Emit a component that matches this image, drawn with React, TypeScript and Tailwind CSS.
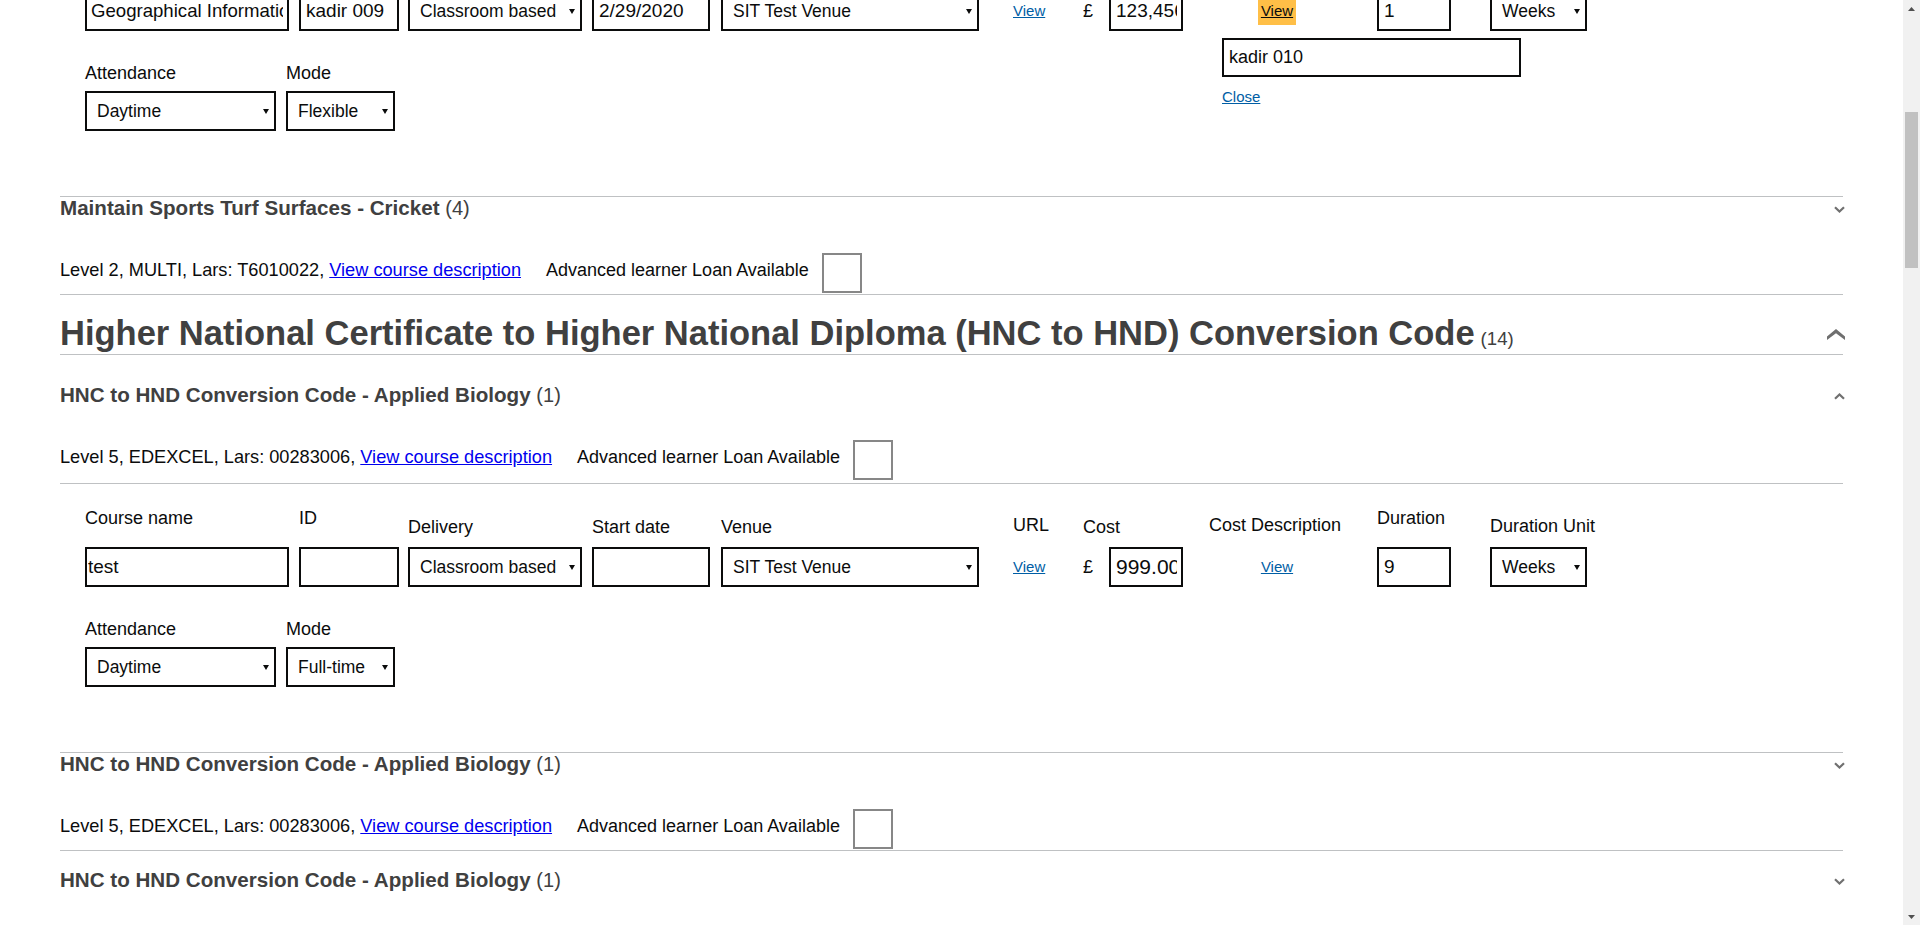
import React from "react";

type FormValues = {
  name: string;
  nameSize: string;
  id: string;
  start: string;
  cost: string;
  costSize: string;
  duration: string;
  mode: string;
  namePad: string;
  focused?: boolean;
};

function Chevron({ dir }: { dir: "up" | "down" }) {
  return (
    <svg width="11" height="7" viewBox="0 0 11 7" className="-mr-[2px]">
      <path
        d={dir === "down" ? "M1 1.2 L5.5 5.5 L10 1.2" : "M1 5.8 L5.5 1.5 L10 5.8"}
        fill="none"
        stroke="#707070"
        strokeWidth="2.2"
      />
    </svg>
  );
}

function BigChevron() {
  return (
    <svg width="18" height="11" viewBox="0 0 18 11" className="-mr-[2px]">
      <polygon points="9,0 18,7.5 18,11 9,4.2 0,11 0,7.5" fill="#6f6f6f" />
    </svg>
  );
}

function Select({ value, w }: { value: string; w: string }) {
  return (
    <div
      className={`flex h-10 items-center justify-between border-2 border-[#0b0c0c] bg-white pl-[10px] pr-[5px] text-[17.5px] text-[#0b0c0c] ${w}`}
    >
      <span className="whitespace-nowrap">{value}</span>
      <svg width="6" height="5" viewBox="0 0 6 5">
        <path d="M0 0H6L3 5Z" fill="#0b0c0c" />
      </svg>
    </div>
  );
}

function TextInput({
  value,
  w,
  pad = "pl-[5px]",
  size = "text-[19px]",
}: {
  value: string;
  w: string;
  pad?: string;
  size?: string;
}) {
  return (
    <input
      readOnly
      value={value}
      className={`h-10 border-2 border-[#0b0c0c] bg-white pr-[4px] text-[#0b0c0c] outline-none ${size} ${pad} ${w}`}
    />
  );
}

function Col({ w, pt, label, children }: { w: string; pt: string; label: string; children: React.ReactNode }) {
  return (
    <div className={`shrink-0 ${w}`}>
      <div className={`h-[47px] leading-6 whitespace-nowrap ${pt}`}>{label}</div>
      {children}
    </div>
  );
}

function ViewLink() {
  return <a className="text-[15px] leading-[18px] text-[#005ea5] underline">View</a>;
}

function CourseForm({ v }: { v: FormValues }) {
  return (
    <div className="border-t border-[#bfc1c3] pt-4 pb-[65px] pl-[25px] text-[18px] text-[#0b0c0c]">
      <div className="flex items-start">
        <Col w="w-[214px]" pt="pt-[6px]" label="Course name">
          <TextInput value={v.name} w="w-[204px]" pad={v.namePad} size={v.nameSize} />
        </Col>
        <Col w="w-[109px]" pt="pt-[6px]" label="ID">
          <TextInput value={v.id} w="w-[100px]" />
        </Col>
        <Col w="w-[184px]" pt="pt-[15px]" label="Delivery">
          <Select value="Classroom based" w="w-[174px]" />
        </Col>
        <Col w="w-[129px]" pt="pt-[15px]" label="Start date">
          <TextInput value={v.start} w="w-[118px]" />
        </Col>
        <Col w="w-[292px]" pt="pt-[15px]" label="Venue">
          <Select value="SIT Test Venue" w="w-[258px]" />
        </Col>
        <Col w="w-[70px]" pt="pt-[13px]" label="URL">
          <div className="flex h-10 items-center">
            <ViewLink />
          </div>
        </Col>
        <Col w="w-[126px]" pt="pt-[15px]" label="Cost">
          <div className="flex h-10 items-center">
            <span>£</span>
            <TextInput value={v.cost} w="w-[74px] ml-[16px]" size={v.costSize} />
          </div>
        </Col>
        <Col w="w-[168px]" pt="pt-[13px]" label="Cost Description">
          <div className="relative flex h-10 w-[136px] items-center justify-center">
            {v.focused ? (
              <a className="bg-[#ffbf47] px-[3px] py-[4px] text-[15px] leading-[20px] text-[#0b0c0c] underline">View</a>
            ) : (
              <ViewLink />
            )}
            {v.focused && (
              <div className="absolute left-[13px] top-[47px] z-10">
                <input
                  readOnly
                  value="kadir 010"
                  className="h-[39px] w-[299px] border-2 border-[#0b0c0c] bg-white px-[5px] text-[18px] text-[#0b0c0c] outline-none"
                />
                <a className="mt-[11px] block text-[15px] leading-[18px] text-[#005ea5] underline">Close</a>
              </div>
            )}
          </div>
        </Col>
        <Col w="w-[113px]" pt="pt-[6px]" label="Duration">
          <TextInput value={v.duration} w="w-[74px]" />
        </Col>
        <Col w="w-[120px]" pt="pt-[14px]" label="Duration Unit">
          <Select value="Weeks" w="w-[97px]" />
        </Col>
      </div>

      <div className="flex items-start pt-[30px]">
        <div className="w-[201px] shrink-0">
          <div className="leading-6">Attendance</div>
          <div className="mt-[6px]">
            <Select value="Daytime" w="w-[191px]" />
          </div>
        </div>
        <div className="shrink-0">
          <div className="leading-6">Mode</div>
          <div className="mt-[6px]">
            <Select value={v.mode} w="w-[109px]" />
          </div>
        </div>
      </div>
    </div>
  );
}

function CourseItem({
  title,
  count,
  meta,
  open,
  top = "",
  border = true,
  bottom = "pb-[1px]",
}: {
  title: string;
  count: string;
  meta: string;
  open?: boolean;
  top?: string;
  border?: boolean;
  bottom?: string;
}) {
  return (
    <div className={`${border ? "border-t border-[#bfc1c3]" : ""} ${top} ${bottom}`}>
      <div className="flex h-6 items-center justify-between">
        <h3 className="mb-[3px] text-[20.6px] font-bold leading-6 whitespace-nowrap text-[#404040]">
          {title} <span className="text-[20px] font-normal leading-none">{count}</span>
        </h3>
        <Chevron dir={open ? "up" : "down"} />
      </div>
      <div className="mt-8 flex items-start text-[18px] text-[#0b0c0c]">
        <p className="mt-[5px] text-[18.2px] leading-6 whitespace-nowrap">
          {meta} <a className="text-[#0000ee] underline">View course description</a>
        </p>
        <span className="ml-[25px] mt-[5px] leading-6 whitespace-nowrap">Advanced learner Loan Available</span>
        <div className="ml-[13px] h-10 w-10 shrink-0 border-2 border-[#878787] bg-white" />
      </div>
    </div>
  );
}

function Scrollbar() {
  return (
    <div className="flex w-[17px] shrink-0 flex-col bg-[#f1f1f1]">
      <div className="flex h-[17px] items-center justify-center">
        <svg width="7" height="4" viewBox="0 0 7 4">
          <path d="M0 4H7L3.5 0Z" fill="#505050" />
        </svg>
      </div>
      <div className="mx-[2px] mt-[95px] h-[156px] bg-[#c1c1c1]" />
      <div className="flex-1" />
      <div className="flex h-[17px] items-center justify-center">
        <svg width="7" height="4" viewBox="0 0 7 4">
          <path d="M0 0H7L3.5 4Z" fill="#505050" />
        </svg>
      </div>
    </div>
  );
}

export default function App() {
  const upper: FormValues = {
    name: "Geographical Information Systems",
    nameSize: "text-[18.6px]",
    id: "kadir 009",
    start: "2/29/2020",
    cost: "123,456",
    costSize: "text-[19px]",
    duration: "1",
    mode: "Flexible",
    namePad: "pl-[4px]",
    focused: true,
  };
  const lower: FormValues = {
    name: "test",
    nameSize: "text-[19px]",
    id: "",
    start: "",
    cost: "999.00",
    costSize: "text-[21px]",
    duration: "9",
    mode: "Full-time",
    namePad: "pl-[1px]",
  };

  return (
    <div className="flex h-[925px] w-full overflow-hidden bg-white font-['Liberation_Sans',Arial,sans-serif]">
      <main className="flex-1 overflow-hidden">
        <div className="-mt-[73px] ml-[60px] w-[1783px]">
          <CourseForm v={upper} />

          <CourseItem
            title="Maintain Sports Turf Surfaces - Cricket"
            count="(4)"
            meta="Level 2, MULTI, Lars: T6010022,"
          />

          <div className="flex h-[61px] items-end justify-between border-t border-b border-[#bfc1c3] pb-[1px]">
            <h2 className="h-[40px] text-[34.5px] font-bold leading-[40px] whitespace-nowrap text-[#404040]">
              Higher National Certificate to Higher National Diploma (HNC to HND) Conversion Code
              <span className="ml-[6px] text-[18.6px] font-normal leading-none">(14)</span>
            </h2>
            <div className="mb-[13px]">
              <BigChevron />
            </div>
          </div>

          <CourseItem
            title="HNC to HND Conversion Code - Applied Biology"
            count="(1)"
            meta="Level 5, EDEXCEL, Lars: 00283006,"
            open
            border={false}
            top="pt-[29px]"
            bottom="pb-[3px]"
          />

          <CourseForm v={lower} />

          <CourseItem
            title="HNC to HND Conversion Code - Applied Biology"
            count="(1)"
            meta="Level 5, EDEXCEL, Lars: 00283006,"
          />

          <CourseItem
            title="HNC to HND Conversion Code - Applied Biology"
            count="(1)"
            meta="Level 5, EDEXCEL, Lars: 00283006,"
            top="pt-[18px]"
          />
        </div>
      </main>
      <Scrollbar />
    </div>
  );
}
